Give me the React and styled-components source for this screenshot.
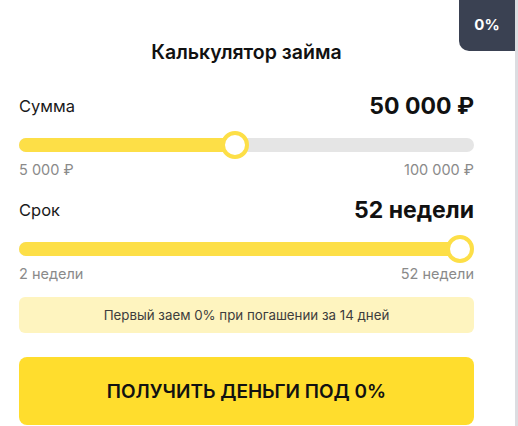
import styled, { createGlobalStyle } from 'styled-components'

const GlobalStyle = createGlobalStyle`
  body {
    margin: 0;
    background: #ffffff;
    font-family: Inter, "Noto Sans", sans-serif;
  }
`

// Layout
const Page = styled.div`
  position: relative;
  width: 515px;
  height: 426px;
  border-right: 3px solid #dcdde1;
  overflow: hidden;
  background: #ffffff;
`

const Card = styled.div`
  padding: 40px 41px 0 19px;
  display: flex;
  flex-direction: column;
`

const Badge = styled.div`
  position: absolute;
  top: 0;
  right: 0;
  width: 56px;
  height: 51px;
  background: #3a4152;
  border-bottom-left-radius: 10px;
  color: #ffffff;
  font-weight: 700;
  font-size: 15px;
  display: flex;
  align-items: center;
  justify-content: center;
  padding-bottom: 2px;
  box-sizing: border-box;
`

const Title = styled.h2`
  margin: 0 0 28px;
  text-align: center;
  font-size: 19.5px;
  font-weight: 600;
  color: #111111;
  line-height: 24px;
`

const Field = styled.div`
  display: flex;
  flex-direction: column;
  margin-bottom: ${p => p.$gap}px;
`

const FieldHead = styled.div`
  display: flex;
  justify-content: space-between;
  align-items: center;
  height: 28px;
`

const FieldLabel = styled.span`
  font-size: 16.5px;
  color: #1a1a1a;
`

const FieldValue = styled.span`
  font-size: 23px;
  font-weight: 700;
  color: #111111;
`

const Track = styled.div`
  position: relative;
  height: 14px;
  border-radius: 7px;
  background: #e5e5e5;
  margin-top: 18px;
`

const Fill = styled.div`
  height: 100%;
  border-radius: 7px;
  background: #fddf47;
`

const Thumb = styled.div`
  position: absolute;
  top: 50%;
  width: 28px;
  height: 28px;
  margin-left: -14px;
  margin-top: -14px;
  border-radius: 50%;
  border: 4px solid #fddf47;
  background: #ffffff;
  box-sizing: border-box;
`

const Scale = styled.div`
  display: flex;
  justify-content: space-between;
  margin-top: 9px;
  font-size: 14.5px;
  color: #8a8a8a;
`

const Note = styled.div`
  height: 36px;
  border-radius: 6px;
  background: #fef4bf;
  display: flex;
  align-items: center;
  justify-content: center;
  font-size: 13.3px;
  color: #3d3d3d;
`

const Button = styled.button`
  margin-top: 24px;
  height: 68px;
  border: none;
  border-radius: 8px;
  background: #ffdd2d;
  font-family: inherit;
  font-size: 19px;
  font-weight: 600;
  color: #111111;
  cursor: pointer;
`

function Slider({ min, max, value }) {
  const p = (value - min) / (max - min)
  const pos = `calc(14px + (100% - 28px) * ${p})`
  return (
    <Track>
      <Fill style={{ width: pos }} />
      <Thumb style={{ left: pos }} />
    </Track>
  )
}

export default function App() {
  return (
    <Page>
      <GlobalStyle />
      <Badge>0%</Badge>
      <Card>
        <Title>Калькулятор займа</Title>
        <Field $gap={18}>
          <FieldHead>
            <FieldLabel>Сумма</FieldLabel>
            <FieldValue>50 000 ₽</FieldValue>
          </FieldHead>
          <Slider min={5000} max={100000} value={50000} />
          <Scale>
            <span>5 000 ₽</span>
            <span>100 000 ₽</span>
          </Scale>
        </Field>
        <Field $gap={15}>
          <FieldHead>
            <FieldLabel>Срок</FieldLabel>
            <FieldValue>52 недели</FieldValue>
          </FieldHead>
          <Slider min={2} max={52} value={52} />
          <Scale>
            <span>2 недели</span>
            <span>52 недели</span>
          </Scale>
        </Field>
        <Note>Первый заем 0% при погашении за 14 дней</Note>
        <Button>ПОЛУЧИТЬ ДЕНЬГИ ПОД 0%</Button>
      </Card>
    </Page>
  )
}
